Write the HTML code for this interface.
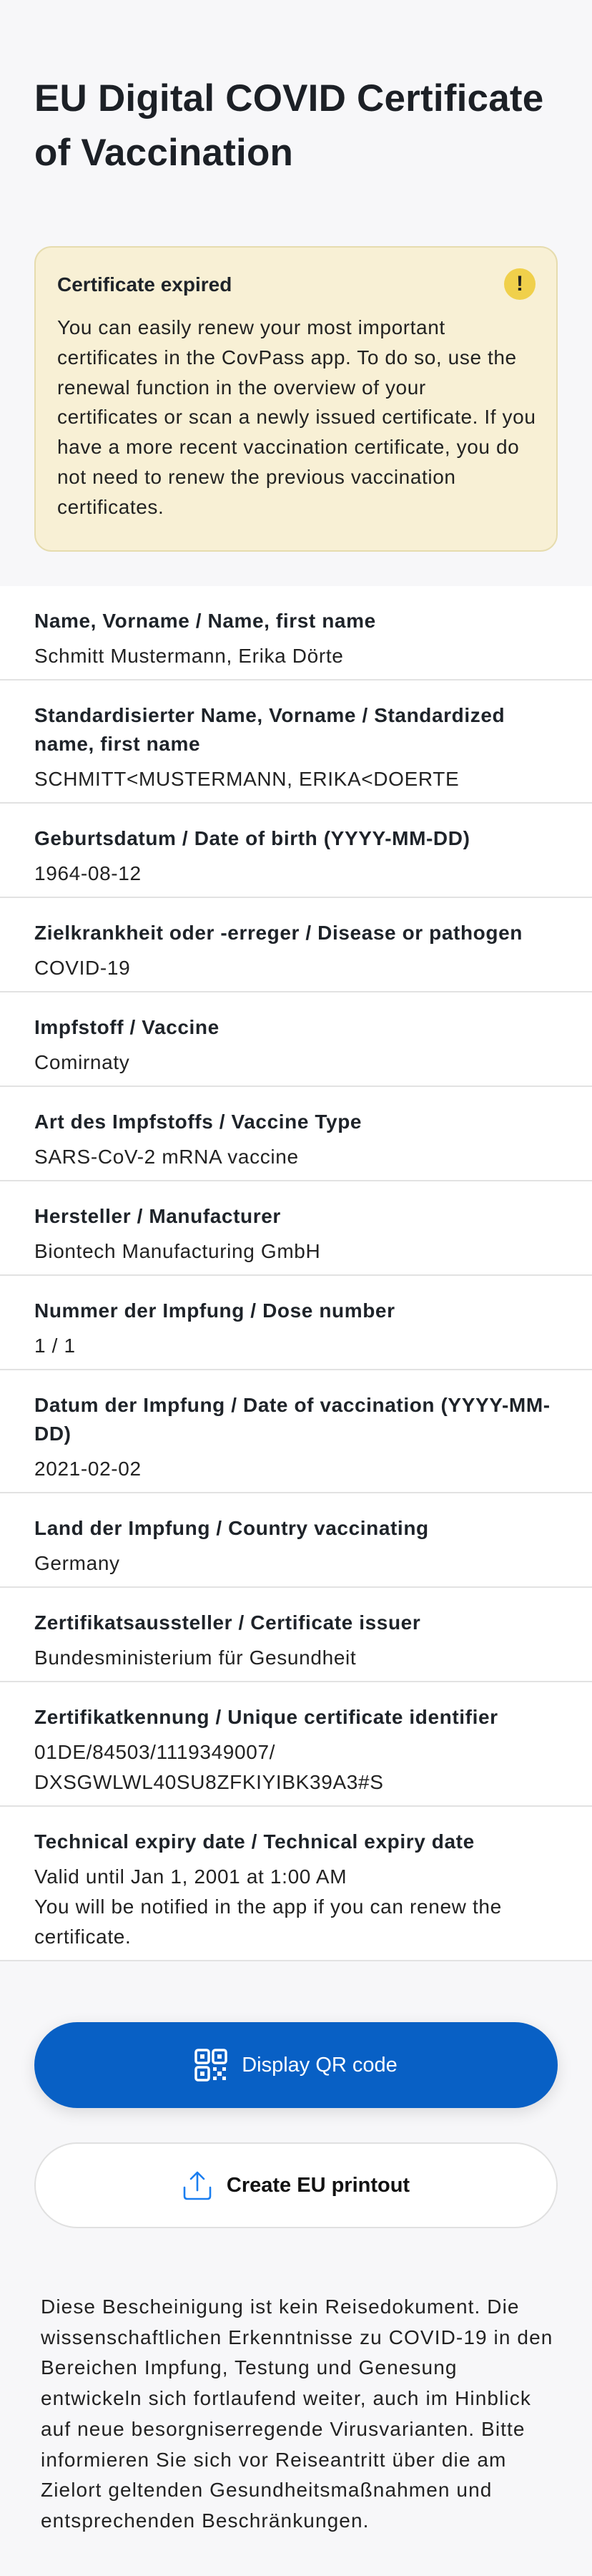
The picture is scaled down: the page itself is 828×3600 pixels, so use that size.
<!DOCTYPE html>
<html><head><meta charset="utf-8"><style>
*{margin:0;padding:0;box-sizing:border-box}
body{width:828px;height:3600px;background:#f7f7f9;font-family:"Liberation Sans",sans-serif;color:#1e2329;overflow:hidden}
h1{position:absolute;left:48px;top:100px;font-size:53px;line-height:76px;font-weight:bold;letter-spacing:0.2px;color:#1c2026;white-space:nowrap}
.box{position:absolute;left:48px;top:344px;width:732px;height:427px;background:#f8f0d5;border:2px solid #e6dcae;border-radius:24px}
.box .t{position:absolute;left:30px;top:36px;font-size:28px;font-weight:bold;letter-spacing:0}
.box .i{position:absolute;left:655px;top:29px;width:44px;height:44px;border-radius:50%;background:#f0d04b;text-align:center;font-weight:bold;font-size:30px;line-height:44px;color:#222}
.box .b{position:absolute;left:30px;top:91px;font-size:28px;line-height:41.8px;letter-spacing:0.6px;color:#222;white-space:nowrap}
.list{position:absolute;left:0;top:819px;width:828px;background:#fff}
.row{padding:29px 48px 11px;border-bottom:2px solid #e2e2e2;white-space:nowrap}
.l{font-size:28px;line-height:40px;font-weight:bold;letter-spacing:0.6px;color:#1e2329}
.v{font-size:28px;line-height:42px;margin-top:8px;letter-spacing:0.65px;color:#222}
.btn{position:absolute;left:48px;width:732px;height:120px;border-radius:60px;display:flex;align-items:center;justify-content:center;font-size:29px}
.b1{top:2826px;background:#0860c5;color:#fff;box-shadow:0 6px 22px rgba(0,0,0,.12)}
.b2{top:2994px;background:#fff;border:2px solid #e0e0e0;color:#111;font-weight:bold}
.foot{position:absolute;left:57px;top:3203px;font-size:28px;line-height:42.7px;letter-spacing:1.1px;color:#222;white-space:nowrap}
</style></head><body>
<h1>EU Digital COVID Certificate<br>of Vaccination</h1>
<div class="box"><div class="t">Certificate expired</div><div class="i">!</div>
<div class="b">You can easily renew your most important<br>certificates in the CovPass app. To do so, use the<br>renewal function in the overview of your<br>certificates or scan a newly issued certificate. If you<br>have a more recent vaccination certificate, you do<br>not need to renew the previous vaccination<br>certificates.</div></div>
<div class="list">
<div class="row"><div class="l">Name, Vorname / Name, first name</div><div class="v">Schmitt Mustermann, Erika Dörte</div></div>
<div class="row"><div class="l">Standardisierter Name, Vorname / Standardized<br>name, first name</div><div class="v">SCHMITT&lt;MUSTERMANN, ERIKA&lt;DOERTE</div></div>
<div class="row"><div class="l">Geburtsdatum / Date of birth (YYYY-MM-DD)</div><div class="v">1964-08-12</div></div>
<div class="row"><div class="l">Zielkrankheit oder -erreger / Disease or pathogen</div><div class="v">COVID-19</div></div>
<div class="row"><div class="l">Impfstoff / Vaccine</div><div class="v">Comirnaty</div></div>
<div class="row"><div class="l">Art des Impfstoffs / Vaccine Type</div><div class="v">SARS-CoV-2 mRNA vaccine</div></div>
<div class="row"><div class="l">Hersteller / Manufacturer</div><div class="v">Biontech Manufacturing GmbH</div></div>
<div class="row"><div class="l">Nummer der Impfung / Dose number</div><div class="v">1 / 1</div></div>
<div class="row"><div class="l">Datum der Impfung / Date of vaccination (YYYY-MM-<br>DD)</div><div class="v">2021-02-02</div></div>
<div class="row"><div class="l">Land der Impfung / Country vaccinating</div><div class="v">Germany</div></div>
<div class="row"><div class="l">Zertifikatsaussteller / Certificate issuer</div><div class="v">Bundesministerium für Gesundheit</div></div>
<div class="row"><div class="l">Zertifikatkennung / Unique certificate identifier</div><div class="v">01DE/84503/1119349007/<br>DXSGWLWL40SU8ZFKIYIBK39A3#S</div></div>
<div class="row"><div class="l">Technical expiry date / Technical expiry date</div><div class="v">Valid until Jan 1, 2001 at 1:00 AM<br>You will be notified in the app if you can renew the<br>certificate.</div></div>
</div>
<div class="btn b1"><svg width="46" height="46" viewBox="0 0 46 46" style="margin-right:20px" fill="none" stroke="#fff" stroke-width="3.5"><rect x="2" y="2" width="18" height="18" rx="3"/><rect x="26" y="2" width="18" height="18" rx="3"/><rect x="2" y="26" width="18" height="18" rx="3"/><g fill="#fff" stroke="none"><rect x="8" y="8" width="6" height="6"/><rect x="32" y="8" width="6" height="6"/><rect x="8" y="32" width="6" height="6"/><rect x="26" y="26" width="5" height="5"/><rect x="39" y="26" width="5" height="5"/><rect x="32" y="32" width="6" height="6"/><rect x="26" y="39" width="5" height="5"/><rect x="39" y="39" width="5" height="5"/></g></svg>Display QR code</div>
<div class="btn b2"><svg width="42" height="42" viewBox="0 0 42 42" style="margin-right:20px" fill="none" stroke="#1a7ef0" stroke-width="2.6" stroke-linecap="round" stroke-linejoin="round"><path d="M21 4V28M12 12L21 3L30 12"/><path d="M3 24V36Q3 40 7 40H35Q39 40 39 36V24"/></svg>Create EU printout</div>
<div class="foot">Diese Bescheinigung ist kein Reisedokument. Die<br>wissenschaftlichen Erkenntnisse zu COVID-19 in den<br>Bereichen Impfung, Testung und Genesung<br>entwickeln sich fortlaufend weiter, auch im Hinblick<br>auf neue besorgniserregende Virusvarianten. Bitte<br>informieren Sie sich vor Reiseantritt über die am<br>Zielort geltenden Gesundheitsmaßnahmen und<br>entsprechenden Beschränkungen.</div>
</body></html>
